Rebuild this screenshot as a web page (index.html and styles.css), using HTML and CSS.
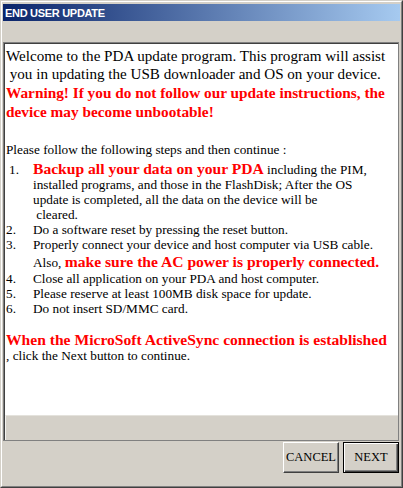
FILE: index.html
```html
<!DOCTYPE html>
<html>
<head>
<meta charset="utf-8">
<link rel="stylesheet" href="styles.css">
</head>
<body>
<div class="window">
  <div class="frame">
    <div class="titlebar">END USER UPDATE</div>
    <div class="gap"></div>
    <div class="box">
      <div class="content">
        <p class="intro">Welcome to the PDA update program. This program will assist<br>&nbsp;you in updating the USB downloader and OS on your device.</p>
        <p class="warning">Warning! If you do not follow our update instructions, the<br>device may become unbootable!</p>
        <p class="small lead">Please follow the following steps and then continue :</p>
        <ol class="steps">
          <li><span class="num first">1.</span><span class="txt"><span class="red">Backup all your data on your PDA</span> including the PIM,<br>installed programs, and those in the FlashDisk; After the OS<br>update is completed, all the data on the device will be<br>&nbsp;cleared.</span></li>
          <li><span class="num">2.</span><span class="txt">Do a software reset by pressing the reset button.</span></li>
          <li><span class="num">3.</span><span class="txt">Properly connect your device and host computer via USB cable.<br>Also, <span class="red tall">make sure the AC power is properly connected.</span></span></li>
          <li><span class="num">4.</span><span class="txt">Close all application on your PDA and host computer.</span></li>
          <li><span class="num">5.</span><span class="txt">Please reserve at least 100MB disk space for update.</span></li>
          <li><span class="num">6.</span><span class="txt">Do not insert SD/MMC card.</span></li>
        </ol>
        <p class="small final"><span class="red">When the MicroSoft ActiveSync connection is established</span><br>, click the Next button to continue.</p>
      </div>
      <div class="strip"></div>
    </div>
    <div class="buttons">
      <button class="btn">CANCEL</button>
      <button class="btn default">NEXT</button>
    </div>
  </div>
</div>
</body>
</html>
```

FILE: styles.css
```css
html, body {
  margin: 0;
  padding: 0;
  background: #d4d0c8;
}

.window {
  box-sizing: border-box;
  width: 403px;
  height: 488px;
  border: 1px solid;
  border-color: #d4d0c8 #404040 #404040 #d4d0c8;
}

.frame {
  box-sizing: border-box;
  height: 100%;
  border: 1px solid;
  border-color: #ffffff #808080 #808080 #ffffff;
  padding: 1px;
  display: flex;
  flex-direction: column;
}

.titlebar {
  height: 17px;
  margin-top: 1px;
  padding-left: 2px;
  background: linear-gradient(to right, #0a246a, #a6caf0);
  color: #ffffff;
  font-family: "Liberation Sans", Arial, sans-serif;
  font-weight: bold;
  font-size: 11px;
  letter-spacing: -0.3px;
  display: flex;
  align-items: center;
  white-space: nowrap;
}

.gap {
  height: 21px;
  flex: none;
}

.box {
  box-sizing: border-box;
  height: 399px;
  margin-right: 1px;
  border: 1px solid #808080;
  box-shadow: inset 1px 1px 0 #404040;
  display: flex;
  flex-direction: column;
  flex: none;
}

.content {
  height: 371px;
  margin: 1px 0 0 1px;
  background: #ffffff;
  padding: 3px 0 0 1px;
  box-sizing: border-box;
  font-family: "Liberation Serif", "Times New Roman", serif;
  color: #000000;
  overflow: hidden;
}

.strip {
  flex: 1;
  margin-left: 1px;
  background: #d4d0c8;
  border-top: 1px solid #e4e2dc;
  border-left: 1px solid #f4f3f0;
}

p {
  margin: 0;
}

.intro {
  font-size: 15.1px;
  line-height: 18px;
  white-space: nowrap;
}

.warning {
  font-size: 15.3px;
  line-height: 19px;
  font-weight: bold;
  color: #ff0000;
  white-space: nowrap;
}

.red {
  color: #ff0000;
  font-weight: bold;
  font-size: 15.6px;
}

.red.tall {
  line-height: 19px;
}

.small {
  font-size: 13.25px;
  line-height: 15px;
}

.lead {
  margin-top: 21px;
}

.steps {
  list-style: none;
  margin: 4px 0 0 0;
  padding: 0;
  font-size: 13.25px;
  line-height: 15px;
}

.steps li {
  display: flex;
  align-items: baseline;
  white-space: nowrap;
}

.num {
  width: 27px;
  flex: none;
}

.num.first {
  padding-left: 3px;
  width: 24px;
}

.final {
  margin-top: 16px;
  white-space: nowrap;
}

.buttons {
  display: flex;
  justify-content: flex-end;
  gap: 4px;
  margin-top: 1px;
  margin-right: 1px;
}

.btn {
  box-sizing: border-box;
  width: 56px;
  height: 31px;
  padding: 0;
  margin: 0;
  background: #d4d0c8;
  border: 1px solid;
  border-color: #ffffff #404040 #404040 #ffffff;
  box-shadow: inset -1px -1px 0 #808080;
  font-family: "Liberation Serif", "Times New Roman", serif;
  font-size: 12.5px;
  color: #000000;
}

.btn.default {
  border: 1px solid #000000;
  box-shadow: inset 1px 1px 0 #ffffff, inset -1px -1px 0 #404040, inset -2px -2px 0 #808080;
}
```
